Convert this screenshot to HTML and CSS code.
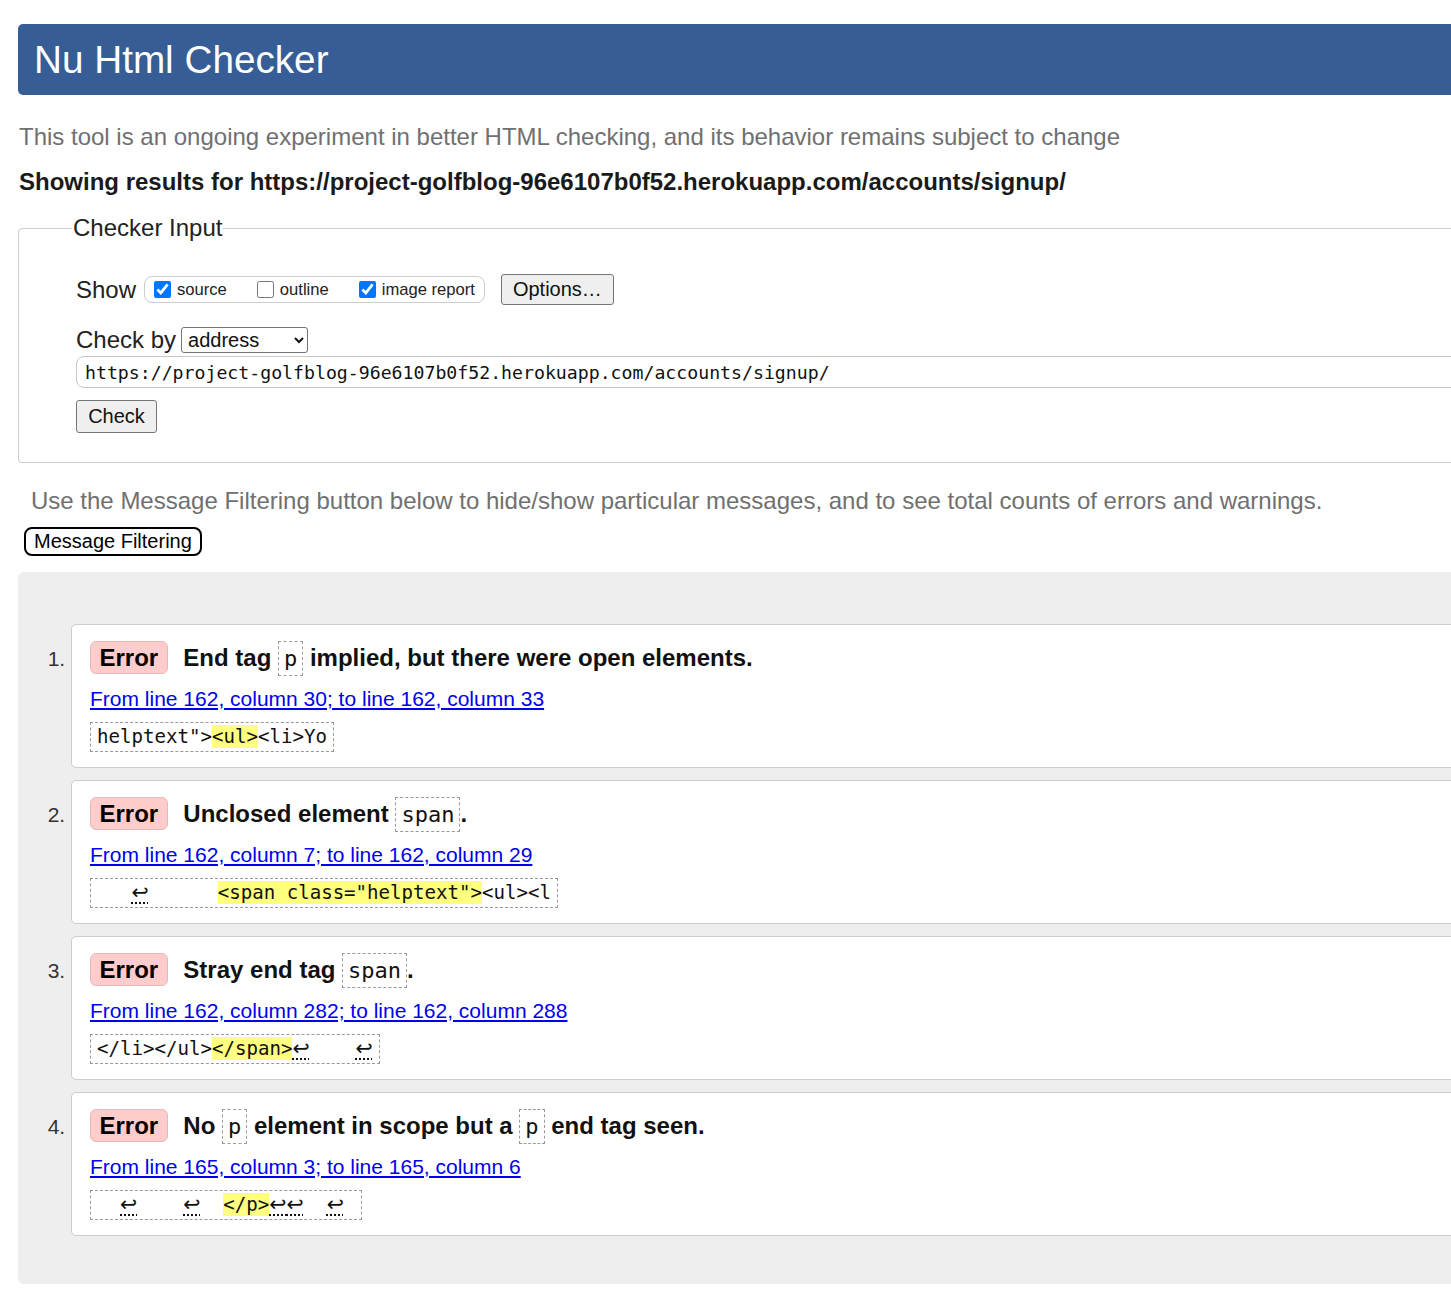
FILE: index.html
```html
<!DOCTYPE html>
<html lang="en">
<head>
<meta charset="utf-8">
<title>Nu Html Checker</title>
<link rel="stylesheet" href="styles.css">
</head>
<body>
<div class="page">
  <h1 class="banner">Nu Html Checker</h1>
  <p class="intro">This tool is an ongoing experiment in better HTML checking, and its behavior remains subject to change</p>
  <p class="results">Showing results for https://project-golfblog-96e6107b0f52.herokuapp.com/accounts/signup/</p>
  <fieldset class="checker">
    <legend>Checker Input</legend>
    <div class="show-row">
      <span class="lbl">Show</span>
      <span class="opts">
        <label class="opt"><input type="checkbox" checked>source</label>
        <label class="opt"><input type="checkbox">outline</label>
        <label class="opt"><input type="checkbox" checked>image report</label>
      </span>
      <button class="btn options-btn" type="button">Options…</button>
    </div>
    <div class="by-row">
      <span class="lbl">Check by</span>
      <select class="by-select"><option>address</option></select>
    </div>
    <input class="url" type="text" value="https://project-golfblog-96e6107b0f52.herokuapp.com/accounts/signup/">
    <button class="btn check-btn" type="button">Check</button>
  </fieldset>
  <p class="hint">Use the Message Filtering button below to hide/show particular messages, and to see total counts of errors and warnings.</p>
  <button class="filter-btn" type="button">Message Filtering</button>
  <div class="results-area">
    <ol class="messages">
      <li class="card">
        <p class="msg"><strong class="badge">Error</strong> End tag <code>p</code> implied, but there were open elements.</p>
        <p class="loc"><a href="#">From line 162, column 30; to line 162, column 33</a></p>
        <code class="extract">helptext"&gt;<mark>&lt;ul&gt;</mark>&lt;li&gt;Yo</code>
      </li>
      <li class="card">
        <p class="msg"><strong class="badge">Error</strong> Unclosed element <code>span</code>.</p>
        <p class="loc"><a href="#">From line 162, column 7; to line 162, column 29</a></p>
        <code class="extract">   <b class="lf">↩</b>      <mark>&lt;span class="helptext"&gt;</mark>&lt;ul&gt;&lt;l</code>
      </li>
      <li class="card">
        <p class="msg"><strong class="badge">Error</strong> Stray end tag <code>span</code>.</p>
        <p class="loc"><a href="#">From line 162, column 282; to line 162, column 288</a></p>
        <code class="extract">&lt;/li&gt;&lt;/ul&gt;<mark>&lt;/span&gt;</mark><b class="lf">↩</b>    <b class="lf">↩</b></code>
      </li>
      <li class="card">
        <p class="msg"><strong class="badge">Error</strong> No <code>p</code> element in scope but a <code>p</code> end tag seen.</p>
        <p class="loc"><a href="#">From line 165, column 3; to line 165, column 6</a></p>
        <code class="extract">  <b class="lf">↩</b>    <b class="lf">↩</b>  <mark>&lt;/p&gt;</mark><b class="lf">↩</b><b class="lf">↩</b>  <b class="lf">↩</b> </code>
      </li>
    </ol>
  </div>
</div>
</body>
</html>
```
FILE: styles.css
```css
html, body {
  margin: 0;
  overflow: hidden;
  background: #fff;
}
body {
  font-family: "Liberation Sans", Arial, sans-serif;
  color: #222;
}
.page {
  width: 1700px;
  padding: 24px 0 0 18px;
}
.banner {
  margin: 0;
  height: 71px;
  line-height: 71px;
  background: #365d95;
  color: #fff;
  font-size: 38.7px;
  font-weight: normal;
  padding-left: 16px;
  border-radius: 5px;
}
.intro {
  margin: 28px 0 0;
  font-size: 24px;
  line-height: 28px;
  color: #707070;
  padding-left: 1px;
}
.results {
  margin: 17px 0 0;
  font-size: 24px;
  line-height: 28px;
  font-weight: bold;
  color: #1a1a1a;
  padding-left: 1px;
}
.checker {
  margin: 18px 0 0;
  border: 1px solid #ccc;
  border-radius: 4px;
  padding: 0 0 29px 57px;
}
.checker legend {
  font-size: 24px;
  line-height: 28px;
  padding: 0 1px;
  margin-left: -4px;
  color: #222;
}
.show-row {
  margin-top: 32px;
  display: flex;
  align-items: center;
  height: 31px;
}
.lbl {
  font-size: 24px;
  color: #222;
}
.show-row .lbl { margin-right: 8px; }
.opts {
  display: inline-flex;
  align-items: center;
  box-sizing: border-box;
  height: 27px;
  border: 1px solid #ccc;
  border-radius: 8px;
  padding: 0 9px;
}
.opt {
  display: inline-flex;
  align-items: center;
  font-size: 16.6px;
  color: #222;
  margin-right: 30px;
}
.opt:last-child { margin-right: 0; }
.opt input {
  width: 17px;
  height: 17px;
  margin: 0 6px 0 0;
}
.btn {
  font-family: "Liberation Sans", Arial, sans-serif;
  font-size: 20px;
  color: #111;
  background: #efefef;
  border: 1px solid #767676;
  border-radius: 3px;
  padding: 0 11px;
}
.options-btn {
  margin-left: 16px;
  height: 31px;
}
.by-row {
  margin-top: 22px;
  display: flex;
  align-items: center;
  height: 26px;
}
.by-select {
  margin-left: 5px;
  width: 127px;
  height: 26px;
  font-family: "Liberation Sans", Arial, sans-serif;
  font-size: 20px;
  color: #111;
  border: 1px solid #767676;
  border-radius: 3px;
  background: #fff;
  padding: 0 2px;
}
.url {
  display: block;
  box-sizing: border-box;
  margin-top: 3px;
  width: 1500px;
  height: 32px;
  border: 1px solid #c8c8c8;
  border-radius: 8px;
  padding: 0 8px;
  font-family: "DejaVu Sans Mono", monospace;
  font-size: 18.2px;
  color: #111;
}
.check-btn {
  display: block;
  margin-top: 12px;
  height: 33px;
  width: 81px;
  padding: 0;
}
.hint {
  margin: 24px 0 0;
  padding-left: 13px;
  font-size: 24px;
  line-height: 28px;
  color: #707070;
}
.filter-btn {
  display: block;
  margin: 12px 0 0 6px;
  font-family: "Liberation Sans", Arial, sans-serif;
  font-size: 20px;
  line-height: 25px;
  height: 29px;
  color: #000;
  background: #fff;
  border: 2px solid #000;
  border-radius: 8px;
  padding: 0 8px;
}
.results-area {
  margin-top: 16px;
  background: #eee;
  border-radius: 6px 0 0 6px;
  padding: 52px 0 48px 53px;
}
.messages {
  margin: 0;
  padding: 0;
  list-style: decimal outside;
}
.card {
  background: #fff;
  border: 1px solid #ccc;
  border-radius: 5px;
  padding: 15px 18px 15px;
  margin-bottom: 12px;
  font-size: 21px;
}
.card:last-child { margin-bottom: 0; }
.card::marker {
  color: #333;
  font-size: 21px;
}
.msg {
  margin: 0;
  height: 35px;
  font-size: 24px;
  line-height: 35px;
  font-weight: bold;
  color: #111;
}
.badge {
  display: inline-block;
  background: #fcc;
  border: 1px solid #e3baba;
  border-radius: 6px;
  padding: 0 8.5px;
  line-height: 31px;
  margin-right: 9px;
  color: #000;
}
.msg code {
  display: inline-block;
  font-family: "DejaVu Sans Mono", monospace;
  font-weight: normal;
  font-size: 22px;
  line-height: 33px;
  border: 1px dashed #999;
  padding: 0 5px;
  color: #111;
}
.loc {
  margin: 12px 0 0;
  height: 24px;
  font-size: 21px;
  line-height: 24px;
}
.loc a {
  color: #00e;
}
.extract {
  display: block;
  width: fit-content;
  height: 28px;
  overflow: hidden;
  margin-top: 11px;
  border: 1px dashed #999;
  padding: 0 6px;
  font-family: "DejaVu Sans Mono", monospace;
  font-size: 19.1px;
  line-height: 28px;
  white-space: pre;
  color: #111;
}
.extract mark {
  background: #ffff80;
  color: inherit;
}
.lf {
  font-family: "DejaVu Sans", sans-serif;
  font-weight: normal;
  font-size: 20.5px;
  line-height: 1;
  text-decoration: underline dotted;
  text-underline-offset: 3px;
}
```
